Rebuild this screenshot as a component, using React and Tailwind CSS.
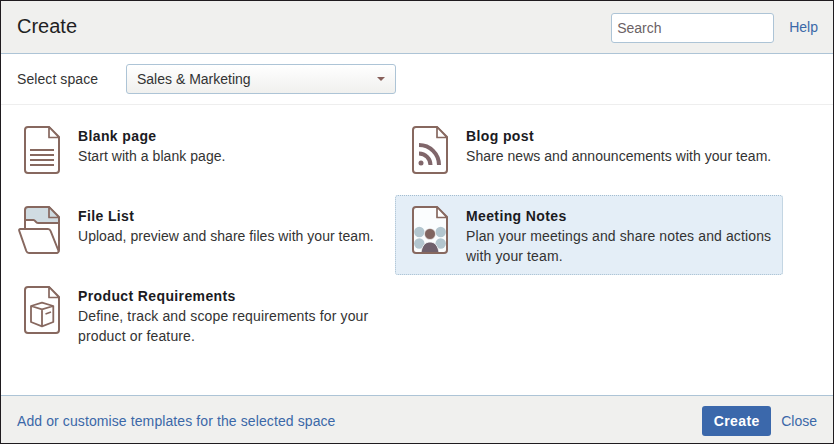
const BROWN = '#87685f';

function Doc({ children, fill = 'none' }) {
  return (
    <svg className="h-[52px] w-[48px] shrink-0" viewBox="0 0 48 52" fill="none" stroke={BROWN} strokeWidth="2">
      <path fill={fill} strokeLinejoin="round" d="M12 3h21l10 10v33a3 3 0 0 1-3 3H12a3 3 0 0 1-3-3V6a3 3 0 0 1 3-3z" />
      {children}
      <path fill="#fff" strokeWidth="1.7" strokeLinejoin="round" d="M33 3v10.5h10z" />
    </svg>
  );
}

function BlankIcon() {
  return (
    <Doc>
      <path d="M14 26h24M14 31h24M14 36h24M14 41h24" />
    </Doc>
  );
}

function BlogIcon() {
  return (
    <Doc>
      <g stroke="#80666a">
        <circle cx="17" cy="39" r="2.5" fill="#80666a" stroke="none" />
        <path strokeWidth="4" d="M15 29.500a11.500 11.500 0 0 1 11.500 11.500M15 21a20 20 0 0 1 20 20" />
      </g>
    </Doc>
  );
}

function FileListIcon() {
  return (
    <svg className="h-[52px] w-[48px] shrink-0" viewBox="0 0 48 52" fill="none" stroke={BROWN} strokeWidth="2" strokeLinejoin="round">
      <path fill="#d0dce2" stroke="none" d="M9 3h24l10 10v6H21l-2.500-3H9z" />
      <path d="M9 25V6a3 3 0 0 1 3-3h21l10 10v33a3 3 0 0 1-2 2.800" />
      <path d="M9 16h8.500c2 0 2 3 4.500 3h21" />
      <path fill="#fff" d="M4.500 25h27.500c1.500 0 2.200 1 2.600 2l7.800 19.500c.5 1.500-.5 2.500-2 2.500H13c-1.500 0-2.300-1-2.700-2L3.300 27c-.5-1.300 0-2 1.200-2z" />
      <path fill="#d0dce2" strokeWidth="1.700" d="M33 3v10.500h10z" />
    </svg>
  );
}

function RequirementsIcon() {
  return (
    <Doc>
      <path strokeWidth="1.800" strokeLinejoin="round" d="M15 22l11-3.300L37.300 22v16L26 42.300 15 38zM15 22l11 3.300L37.300 22M26 25.300v17" />
      <path strokeWidth="1.500" d="M29.500 30l5.500-2" />
    </Doc>
  );
}

function MeetingIcon() {
  return (
    <Doc fill="#fbfdfe">
      <g fill="#b3c6cf" stroke="none">
        <circle cx="15.300" cy="28" r="5.200" />
        <circle cx="36.700" cy="28" r="5.200" />
        <circle cx="15.300" cy="39.500" r="5.200" />
        <circle cx="36.700" cy="39.500" r="5.200" />
      </g>
      <circle cx="26" cy="30" r="5.500" fill="#80645f" stroke="#fbfdfe" strokeWidth="0.600" />
      <path fill="#6f606c" stroke="#fbfdfe" strokeWidth="0.800" d="M17 48.500c1-6.500 4-10.500 9-10.500s8 4 9 10.500" />
      <path d="M12 49h28" />
    </Doc>
  );
}

const templates = [
  { title: 'Blank page', tracking: 'tracking-[0.05px]', lines: ['Start with a blank page.'], Icon: BlankIcon },
  { title: 'Blog post', tracking: 'tracking-[0.04px]', lines: ['Share news and announcements with your team.'], Icon: BlogIcon },
  { title: 'File List', tracking: 'tracking-[0.035px]', lines: ['Upload, preview and share files with your team.'], Icon: FileListIcon },
  { title: 'Meeting Notes', tracking: 'tracking-[0.12px]', lines: ['Plan your meetings and share notes and actions', 'with your team.'], Icon: MeetingIcon, selected: true },
  { title: 'Product Requirements', tracking: 'tracking-[0.14px]', lines: ['Define, track and scope requirements for your', 'product or feature.'], Icon: RequirementsIcon },
];

function Template({ title, tracking, lines, Icon, selected }) {
  return (
    <li className={`flex h-20 rounded-[3px] border border-dotted pl-2 pt-2 ${selected ? 'border-[#a3bdd0] bg-[#e4eef7]' : 'border-transparent'}`}>
      <Icon />
      <div className="ml-3.5 pt-0.5 leading-5 whitespace-nowrap">
        <h2 className="font-bold tracking-[0.38px] text-[#1b1b1f]">{title}</h2>
        {lines.map((line) => (
          <p key={line} className={tracking}>{line}</p>
        ))}
      </div>
    </li>
  );
}

export default function App() {
  return (
    <div className="flex h-[444px] w-[834px] flex-col border border-[#1f1b1f] bg-white font-['Liberation_Sans',Arial,sans-serif] text-[14px] leading-5 text-[#333]">
      <header className="flex h-[53px] shrink-0 items-start border-b border-[#adc4d6] bg-[#f0f0ee] pl-4 pr-[15px]">
        <h1 className="pt-[11px] text-[20px] leading-7 text-[#1f1f23]">Create</h1>
        <input className="ml-auto mt-3 h-[30px] w-[163px] rounded-[3px] border border-[#adc4d6] bg-white px-[5px] placeholder:text-[#6b6265] placeholder:opacity-100" placeholder="Search" />
        <a className="ml-[15px] mt-4 text-[#3b68a8]">Help</a>
      </header>
      <div className="flex h-[51px] shrink-0 items-center border-b border-[#eeeeee] pl-4">
        <span className="w-[109px] tracking-[0.08px]">Select space</span>
        <button className="flex h-[30px] w-[270px] items-center justify-between rounded-[3px] border border-[#adc4d6] bg-linear-to-b from-white to-[#f0f0ee] pl-2.5 pr-2.5">
          Sales &amp; Marketing
          <svg className="h-[4px] w-[8px]" viewBox="0 0 8 4" fill="#87605b">
            <path d="M0 0h8L4 4z" />
          </svg>
        </button>
      </div>
      <ul className="grid flex-1 grid-cols-[388px_388px] content-start pl-1.5 pt-2.5">
        {templates.map((t) => (
          <Template key={t.title} {...t} />
        ))}
      </ul>
      <footer className="flex h-12 shrink-0 items-center border-t border-[#adc4d6] bg-[#f0f0ee] pl-4 pr-4 pt-[3px] text-[#3b68a8]">
        <a className="tracking-[0.1px]">Add or customise templates for the selected space</a>
        <button className="ml-auto h-[30px] w-[69px] rounded-[3px] bg-[#3b68ab] font-bold tracking-[0.4px] text-white">Create</button>
        <a className="ml-2.5">Close</a>
      </footer>
    </div>
  );
}
